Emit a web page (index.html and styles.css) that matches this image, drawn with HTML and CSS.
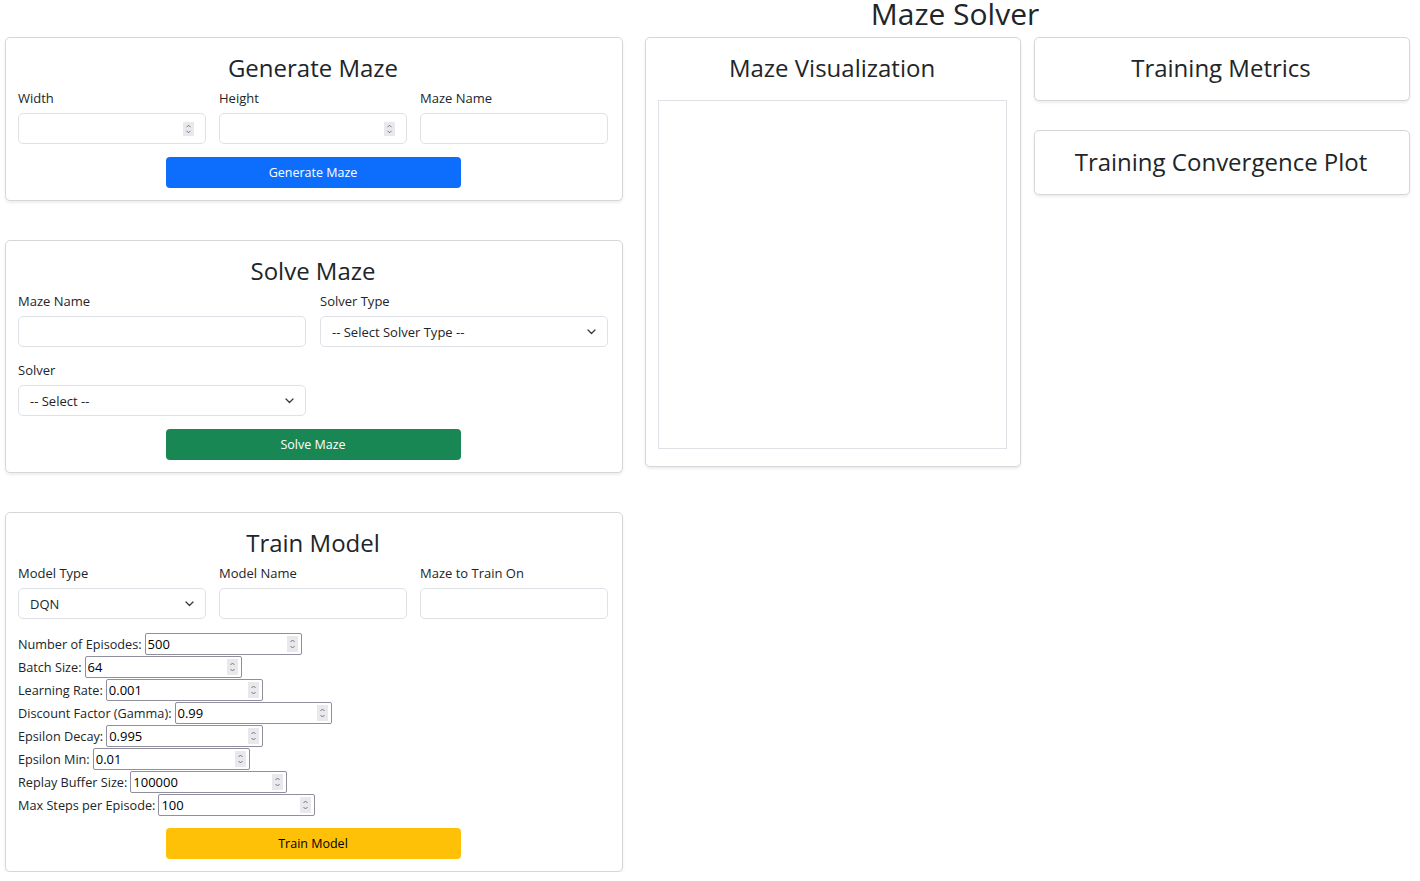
FILE: index.html
```html
<!DOCTYPE html>
<html lang="en">
<head>
<meta charset="utf-8">
<title>Maze Solver</title>
<link rel="stylesheet" href="styles.css">
</head>
<body>
<header class="page-header">
  <h1 class="page-title">Maze Solver</h1>
</header>
<main class="layout">
  <section class="col-left">
    <div class="card">
      <h3 class="card-title">Generate Maze</h3>
      <div class="fields fields-3">
        <div class="field">
          <label class="field-label">Width</label>
          <div class="spin-wrap">
            <input class="control" type="number">
            <svg class="spin spin-lg" width="11" height="14" viewBox="0 0 11 14"><rect width="11" height="14" fill="#e9e9ed"/><path d="M3.5 5.2L5.5 3.2L7.5 5.2M3.5 8.8L5.5 10.8L7.5 8.8" fill="none" stroke="#75757c" stroke-width="1"/></svg>
          </div>
        </div>
        <div class="field">
          <label class="field-label">Height</label>
          <div class="spin-wrap">
            <input class="control" type="number">
            <svg class="spin spin-lg" width="11" height="14" viewBox="0 0 11 14"><rect width="11" height="14" fill="#e9e9ed"/><path d="M3.5 5.2L5.5 3.2L7.5 5.2M3.5 8.8L5.5 10.8L7.5 8.8" fill="none" stroke="#75757c" stroke-width="1"/></svg>
          </div>
        </div>
        <div class="field">
          <label class="field-label">Maze Name</label>
          <input class="control" type="text">
        </div>
      </div>
      <div class="btn-row"><button class="btn btn-primary">Generate Maze</button></div>
    </div>

    <div class="card">
      <h3 class="card-title">Solve Maze</h3>
      <div class="fields fields-2">
        <div class="field">
          <label class="field-label">Maze Name</label>
          <input class="control" type="text">
        </div>
        <div class="field">
          <label class="field-label">Solver Type</label>
          <div class="select-wrap">
            <select class="control select"><option>-- Select Solver Type --</option></select>
            <svg class="chev" width="9" height="6" viewBox="0 0 9 6"><path d="M1 1l3.5 3.5L8 1" fill="none" stroke="#343a40" stroke-width="1.3" stroke-linecap="round" stroke-linejoin="round"/></svg>
          </div>
        </div>
        <div class="field">
          <label class="field-label">Solver</label>
          <div class="select-wrap">
            <select class="control select"><option>-- Select --</option></select>
            <svg class="chev" width="9" height="6" viewBox="0 0 9 6"><path d="M1 1l3.5 3.5L8 1" fill="none" stroke="#343a40" stroke-width="1.3" stroke-linecap="round" stroke-linejoin="round"/></svg>
          </div>
        </div>
      </div>
      <div class="btn-row"><button class="btn btn-success">Solve Maze</button></div>
    </div>

    <div class="card">
      <h3 class="card-title">Train Model</h3>
      <div class="fields fields-3">
        <div class="field">
          <label class="field-label">Model Type</label>
          <div class="select-wrap">
            <select class="control select"><option>DQN</option></select>
            <svg class="chev" width="9" height="6" viewBox="0 0 9 6"><path d="M1 1l3.5 3.5L8 1" fill="none" stroke="#343a40" stroke-width="1.3" stroke-linecap="round" stroke-linejoin="round"/></svg>
          </div>
        </div>
        <div class="field">
          <label class="field-label">Model Name</label>
          <input class="control" type="text">
        </div>
        <div class="field">
          <label class="field-label">Maze to Train On</label>
          <input class="control" type="text">
        </div>
      </div>
      <div class="params">
        <div class="param"><label>Number of Episodes:</label><span class="spin-wrap"><input class="num" type="number" value="500"><svg class="spin spin-sm" width="11" height="16" viewBox="0 0 11 16"><rect width="11" height="16" fill="#e9e9ed"/><path d="M3.5 6L5.5 4L7.5 6M3.5 10L5.5 12L7.5 10" fill="none" stroke="#75757c" stroke-width="1"/></svg></span></div>
        <div class="param"><label>Batch Size:</label><span class="spin-wrap"><input class="num" type="number" value="64"><svg class="spin spin-sm" width="11" height="16" viewBox="0 0 11 16"><rect width="11" height="16" fill="#e9e9ed"/><path d="M3.5 6L5.5 4L7.5 6M3.5 10L5.5 12L7.5 10" fill="none" stroke="#75757c" stroke-width="1"/></svg></span></div>
        <div class="param"><label>Learning Rate:</label><span class="spin-wrap"><input class="num" type="number" value="0.001"><svg class="spin spin-sm" width="11" height="16" viewBox="0 0 11 16"><rect width="11" height="16" fill="#e9e9ed"/><path d="M3.5 6L5.5 4L7.5 6M3.5 10L5.5 12L7.5 10" fill="none" stroke="#75757c" stroke-width="1"/></svg></span></div>
        <div class="param"><label>Discount Factor (Gamma):</label><span class="spin-wrap"><input class="num" type="number" value="0.99"><svg class="spin spin-sm" width="11" height="16" viewBox="0 0 11 16"><rect width="11" height="16" fill="#e9e9ed"/><path d="M3.5 6L5.5 4L7.5 6M3.5 10L5.5 12L7.5 10" fill="none" stroke="#75757c" stroke-width="1"/></svg></span></div>
        <div class="param"><label>Epsilon Decay:</label><span class="spin-wrap"><input class="num" type="number" value="0.995"><svg class="spin spin-sm" width="11" height="16" viewBox="0 0 11 16"><rect width="11" height="16" fill="#e9e9ed"/><path d="M3.5 6L5.5 4L7.5 6M3.5 10L5.5 12L7.5 10" fill="none" stroke="#75757c" stroke-width="1"/></svg></span></div>
        <div class="param"><label>Epsilon Min:</label><span class="spin-wrap"><input class="num" type="number" value="0.01"><svg class="spin spin-sm" width="11" height="16" viewBox="0 0 11 16"><rect width="11" height="16" fill="#e9e9ed"/><path d="M3.5 6L5.5 4L7.5 6M3.5 10L5.5 12L7.5 10" fill="none" stroke="#75757c" stroke-width="1"/></svg></span></div>
        <div class="param"><label>Replay Buffer Size:</label><span class="spin-wrap"><input class="num" type="number" value="100000"><svg class="spin spin-sm" width="11" height="16" viewBox="0 0 11 16"><rect width="11" height="16" fill="#e9e9ed"/><path d="M3.5 6L5.5 4L7.5 6M3.5 10L5.5 12L7.5 10" fill="none" stroke="#75757c" stroke-width="1"/></svg></span></div>
        <div class="param"><label>Max Steps per Episode:</label><span class="spin-wrap"><input class="num" type="number" value="100"><svg class="spin spin-sm" width="11" height="16" viewBox="0 0 11 16"><rect width="11" height="16" fill="#e9e9ed"/><path d="M3.5 6L5.5 4L7.5 6M3.5 10L5.5 12L7.5 10" fill="none" stroke="#75757c" stroke-width="1"/></svg></span></div>
      </div>
      <div class="btn-row btn-row-train"><button class="btn btn-warning">Train Model</button></div>
    </div>
  </section>

  <section class="col-mid">
    <div class="card card-viz">
      <h3 class="card-title">Maze Visualization</h3>
      <div class="maze-canvas"></div>
    </div>
  </section>

  <section class="col-right">
    <div class="card">
      <h3 class="card-title">Training Metrics</h3>
    </div>
    <div class="card card-plot">
      <h3 class="card-title">Training Convergence Plot</h3>
    </div>
  </section>
</main>
</body>
</html>
```

FILE: styles.css
```css
* { box-sizing: border-box; }

body {
  margin: 0;
  font-family: "Open Sans", "Noto Sans", sans-serif;
  color: #212529;
  background: #fff;
  font-size: 13px;
}

.page-header {
  height: 37px;
  padding-left: 490px;
  text-align: center;
}

.page-title {
  margin: 0;
  font-size: 30px;
  font-weight: 400;
  line-height: 28px;
}

.layout {
  display: flex;
  align-items: flex-start;
  padding-left: 5px;
}
.col-left { width: 618px; margin-right: 22px; display: flex; flex-direction: column; gap: 39px; }
.col-mid { width: 376px; margin-right: 13px; }
.col-right { width: 376px; display: flex; flex-direction: column; gap: 29px; }

.card {
  border: 1px solid #d5d6d8;
  border-radius: 5px;
  box-shadow: 0 2px 3px rgba(0,0,0,0.07);
  padding: 13px 14px 12px 12px;
  background: #fff;
}

.card-title {
  margin: 0;
  font-size: 24px;
  font-weight: 400;
  line-height: 34px;
  text-align: center;
}

.col-right .card { padding-bottom: 15px; }
.col-right .card-plot { padding-top: 14px; }

.fields {
  display: grid;
  row-gap: 13px;
  margin-top: 3px;
}
.fields-3 { grid-template-columns: repeat(3, 1fr); column-gap: 13px; }
.fields-2 { grid-template-columns: repeat(2, 1fr); column-gap: 14px; }

.field { display: flex; flex-direction: column; }

.field-label {
  line-height: 20px;
  margin-bottom: 5px;
}

.control {
  display: block;
  height: 31px;
  width: 100%;
  border: 1px solid #dee2e6;
  border-radius: 5px;
  padding: 4px 12px;
  font-family: inherit;
  font-size: 13px;
  color: #212529;
  background: #fff;
}

input[type=number] { -moz-appearance: textfield; }
input[type=number]::-webkit-inner-spin-button,
input[type=number]::-webkit-outer-spin-button {
  -webkit-appearance: none;
  margin: 0;
}

.spin-wrap { position: relative; display: block; }
.param .spin-wrap { display: inline-block; height: 22px; }
.spin { position: absolute; pointer-events: none; }
.spin-lg { right: 12px; top: 9px; }
.spin-sm { right: 4px; top: 3px; }

.select-wrap { position: relative; }
.select {
  appearance: none;
  -webkit-appearance: none;
  padding-left: 11px;
}
.chev {
  position: absolute;
  right: 12px;
  top: 13px;
  pointer-events: none;
}

.btn-row {
  display: flex;
  justify-content: center;
  margin-top: 13px;
}
.btn {
  width: 50%;
  height: 31px;
  border: none;
  border-radius: 4px;
  font-family: inherit;
  font-size: 12.5px;
  line-height: 32px;
  padding: 0;
}
.btn-primary { background: #0d6efd; color: #fff; }
.btn-success { background: #198754; color: #fff; }
.btn-warning { background: #ffc107; color: #000; }

.params { margin-top: 14px; display: flex; flex-direction: column; }
.param {
  height: 23px;
  display: flex;
  align-items: flex-start;
}
.param label { line-height: 22px; margin-right: 3px; font-size: 12.7px; }
.num {
  display: block;
  width: 157px;
  height: 22px;
  border: 1px solid #8f8f9d;
  border-radius: 2px;
  padding: 0 2px;
  font-family: inherit;
  font-size: 13px;
  color: #000;
}
.btn-row-train { margin-top: 11px; }

.card-viz { padding-bottom: 17px; }
.maze-canvas {
  margin-top: 15px;
  width: 349px;
  height: 349px;
  border: 1px solid #dee2e6;
}
```
